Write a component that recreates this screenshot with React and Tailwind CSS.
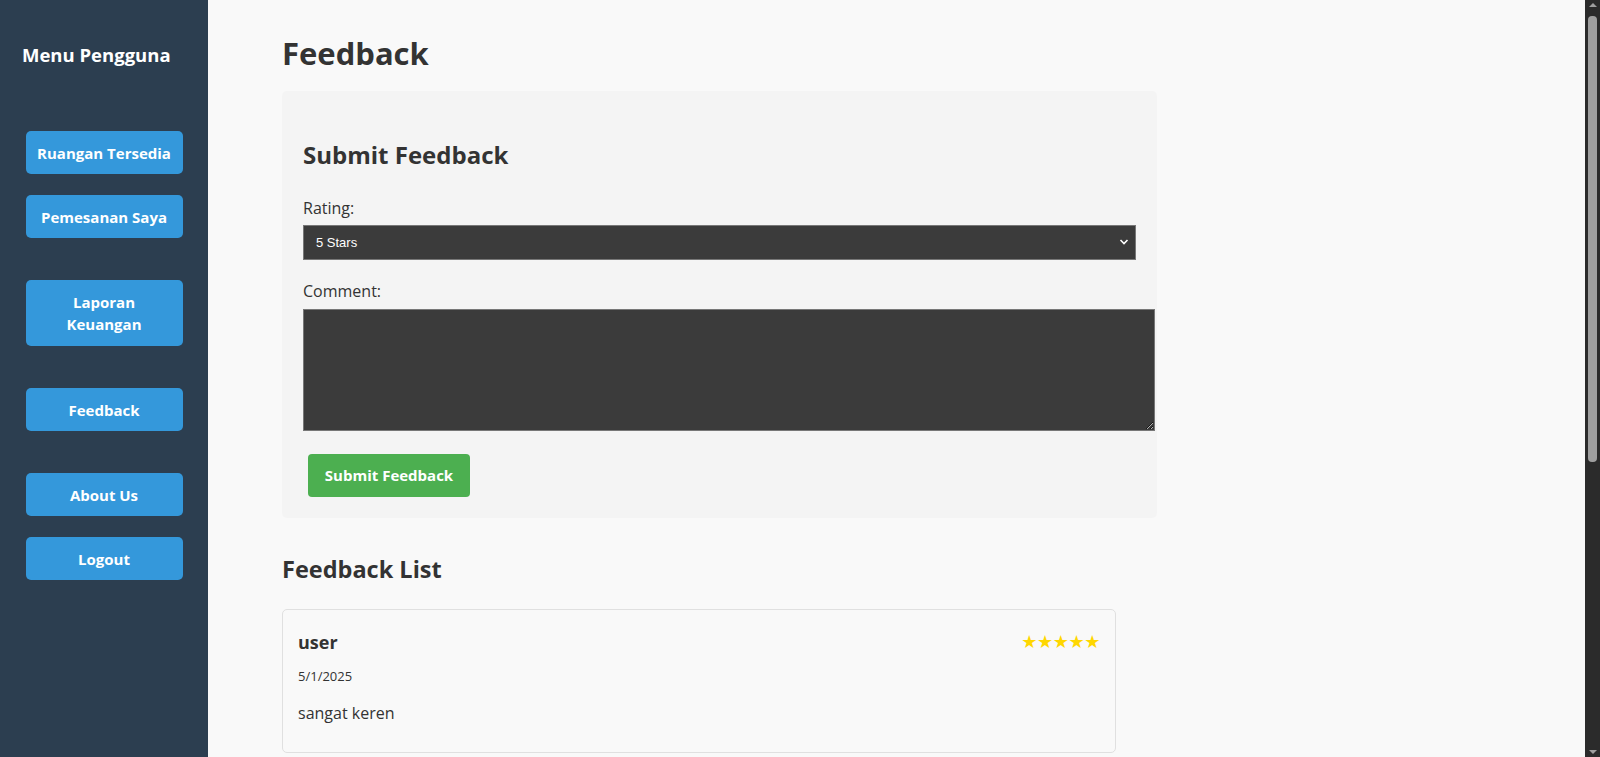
import React from "react";

const font = { fontFamily: '"Open Sans", "Noto Sans", sans-serif' };

function NavButton({ children, className = "" }) {
  return (
    <button
      className={`w-[157px] rounded-[5px] bg-[#3498db] text-white text-[15px] font-bold leading-[22px] flex items-center justify-center text-center ${className}`}
    >
      {children}
    </button>
  );
}

export default function App() {
  return (
    <div className="flex h-screen w-full overflow-hidden text-[#333]" style={font}>
      {/* Sidebar */}
      <aside className="w-[208px] shrink-0 bg-[#2c3e50] flex flex-col">
        <h2 className="mt-[43px] pl-[22px] text-white text-[18.5px] font-bold leading-[24px]">Menu Pengguna</h2>
        <div className="flex flex-col items-center">
          <NavButton className="mt-[64px] h-[43px]">Ruangan Tersedia</NavButton>
          <NavButton className="mt-[21px] h-[43px]">Pemesanan Saya</NavButton>
          <NavButton className="mt-[42px] h-[66px]">
            Laporan
            <br />
            Keuangan
          </NavButton>
          <NavButton className="mt-[42px] h-[43px]">Feedback</NavButton>
          <NavButton className="mt-[42px] h-[43px]">About Us</NavButton>
          <NavButton className="mt-[21px] h-[43px]">Logout</NavButton>
        </div>
      </aside>

      {/* Main */}
      <main className="flex-1 bg-[#f9f9f9] pl-[74px] pt-[33px]">
        <h1 className="text-[31px] font-bold leading-[40px] text-[#333]">Feedback</h1>

        <section className="mt-[18px] w-[875px] rounded-[5px] bg-[#f4f4f4] pl-[21px] pt-[48px] pb-[21px]">
          <h2 className="text-[24px] font-bold leading-[32px] text-[#333]">Submit Feedback</h2>

          <label className="mt-[25px] block text-[16px] leading-[24px] text-[#333]">Rating:</label>
          <div className="relative mt-[5px] w-[833px]">
            <select
              className="block h-[35px] w-full appearance-none border border-[#777] bg-[#3b3b3b] pl-[12px] text-[13px] text-white outline-none"
              style={{ fontFamily: '"Liberation Sans", Arial, sans-serif' }}
              defaultValue="5"
            >
              <option value="5">5 Stars</option>
              <option value="4">4 Stars</option>
              <option value="3">3 Stars</option>
              <option value="2">2 Stars</option>
              <option value="1">1 Star</option>
            </select>
            <svg
              className="pointer-events-none absolute right-[7px] top-[13px]"
              width="10"
              height="8"
              viewBox="0 0 10 8"
              fill="none"
            >
              <path d="M1.5 2 L5 5.5 L8.5 2" stroke="#ffffff" strokeWidth="1.6" />
            </svg>
          </div>

          <label className="mt-[19px] block text-[16px] leading-[24px] text-[#333]">Comment:</label>
          <textarea className="mt-[6px] block h-[122px] w-[852px] resize border border-[#777] bg-[#3b3b3b] text-white outline-none" />

          <button className="mt-[23px] ml-[5px] h-[43px] w-[162px] rounded-[4px] bg-[#4caf50] text-[15px] font-bold text-white">
            Submit Feedback
          </button>
        </section>

        <h2 className="mt-[35px] text-[23.5px] font-bold leading-[32px] text-[#333]">Feedback List</h2>

        <div className="mt-[24px] w-[834px] rounded-[5px] border border-[#e0e0e0] bg-[#f9f9f9] px-[15px] pt-[20px] pb-[27px]">
          <div className="flex items-center justify-between">
            <span className="text-[18px] font-bold leading-[24px] text-[#333]">user</span>
            <span className="text-[18px] leading-[24px] tracking-[-0.4px] text-[#ffd700]" style={{ fontFamily: '"DejaVu Sans", sans-serif' }}>★★★★★</span>
          </div>
          <div className="mt-[13px] text-[13px] leading-[18px] text-[#333]">5/1/2025</div>
          <p className="mt-[16px] text-[16px] leading-[24px] text-[#333]">sangat keren</p>
        </div>
      </main>

      {/* Scrollbar */}
      <div className="w-[15px] shrink-0 bg-[#2b2b2b] flex flex-col items-center">
        <div className="mt-[3px] h-0 w-0 border-x-[4px] border-b-[4px] border-x-transparent border-b-[#9f9f9f]" />
        <div className="mt-[9px] h-[446px] w-[9px] rounded-[4px] bg-[#9f9f9f]" />
        <div className="flex-1" />
        <div className="mb-[3px] h-0 w-0 border-x-[4px] border-t-[4px] border-x-transparent border-t-[#9f9f9f]" />
      </div>
    </div>
  );
}
